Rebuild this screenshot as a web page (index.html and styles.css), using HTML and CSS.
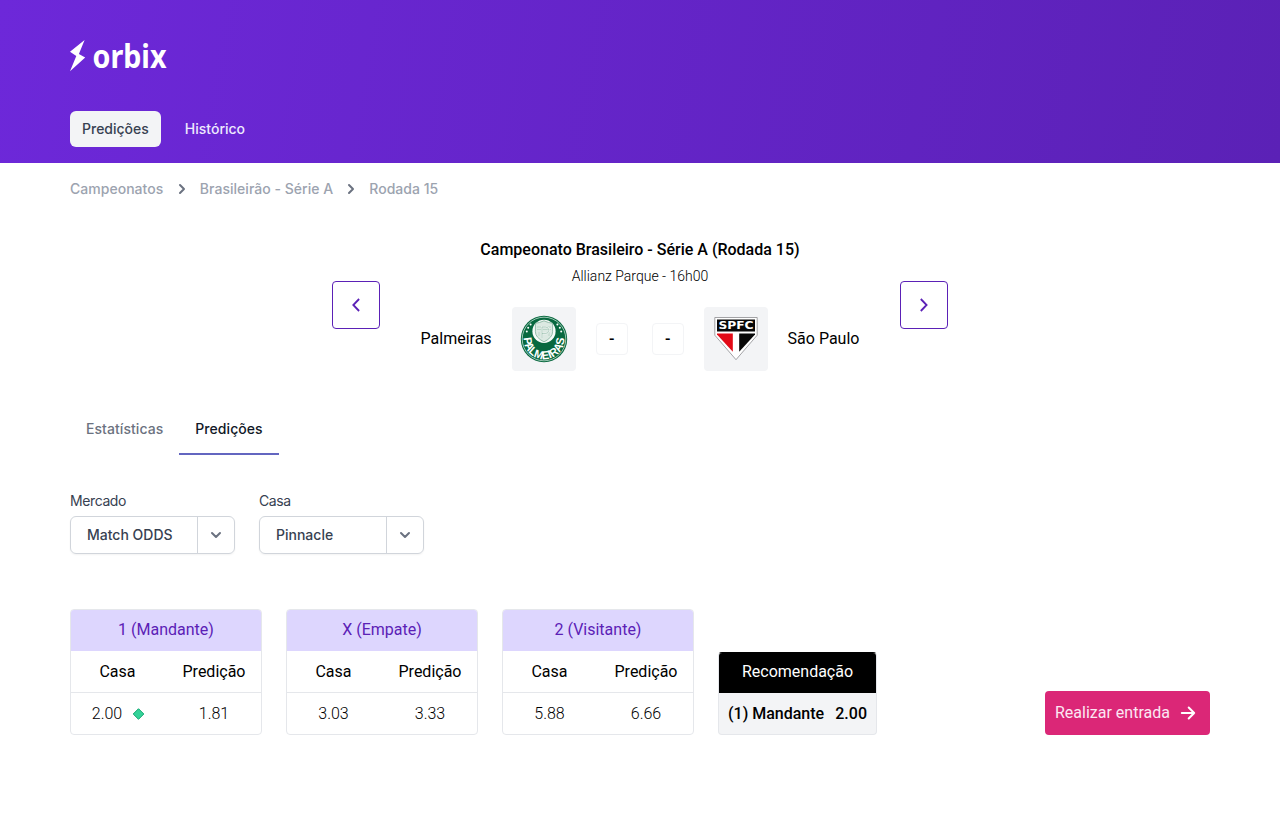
FILE: index.html
```html
<!DOCTYPE html>
<html lang="pt-BR">
<head>
<meta charset="utf-8">
<title>Orbix</title>
<link rel="stylesheet" href="styles.css">
</head>
<body>
<header class="header">
  <svg class="logo" width="110" height="32" viewBox="0 0 110 32" aria-label="orbix">
    <path d="M14.6 0 0 11.8 6.3 16 0 31.3 15.2 17.4 8.9 14Z" fill="#fff"/>
    <text class="logo-text" x="22.5" y="28" textLength="74" lengthAdjust="spacingAndGlyphs">orbix</text>
  </svg>
  <nav class="nav">
    <a class="nav-link nav-active">Predições</a>
    <a class="nav-link">Histórico</a>
  </nav>
</header>
<main class="page">
  <nav class="breadcrumb">
    <span>Campeonatos</span>
    <svg class="crumb-icon" width="20" height="20" viewBox="0 0 20 20"><path d="m8 6 4 4-4 4"/></svg>
    <span>Brasileirão - Série A</span>
    <svg class="crumb-icon" width="20" height="20" viewBox="0 0 20 20"><path d="m8 6 4 4-4 4"/></svg>
    <span>Rodada 15</span>
  </nav>

  <section class="match">
    <button class="arrow" aria-label="Anterior"><svg width="20" height="20" viewBox="0 0 20 20"><path d="m13.1 4-5.8 6 5.8 6"/></svg></button>
    <div class="match-info">
      <h1 class="match-title">Campeonato Brasileiro - Série A (Rodada 15)</h1>
      <p class="match-place">Allianz Parque - 16h00</p>
      <div class="teams">
        <span class="team">Palmeiras</span>
        <div class="badge">
          <svg width="48" height="48" viewBox="0 0 48 48">
            <defs><path id="arc" d="M4.2 19.4A20.3 20.3 0 1 0 43.8 19.4"/></defs>
            <circle cx="24" cy="24" r="23.2" fill="#08683f"/>
            <circle cx="24" cy="24" r="21.8" fill="none" stroke="#d9eee4" stroke-width=".7"/>
            <circle cx="24" cy="16.3" r="11.6" fill="#f7fbf9"/>
            <path d="M15.4 8.2q4-.2 8.6-2.4 4.6 2.2 8.6 2.4v8.6q0 5.7-8.6 10.1-8.6-4.4-8.6-10.1Z" fill="#dce9e2" stroke="#7fae99" stroke-width=".8"/>
            <path d="M17 12h14M17 14.5h14M19 17v4m10-4v4" stroke="#b3cfc2" stroke-width=".8"/>
            <path d="M22 23V12h3.3q3.5 0 3.5 3.3t-3.5 3.3H22" fill="none" stroke="#f7fbf9" stroke-width="1.6"/>
            <path d="M22 23V12h3.3q3.5 0 3.5 3.3t-3.5 3.3H22" fill="none" stroke="#6fa38b" stroke-width=".5"/>
            <g fill="#fff"><circle cx="10.6" cy="9.4" r="1"/><circle cx="8.2" cy="12.8" r="1"/><circle cx="6.8" cy="16.5" r="1"/><circle cx="37.4" cy="9.4" r="1"/><circle cx="39.8" cy="12.8" r="1"/><circle cx="41.2" cy="16.5" r="1"/></g>
            <text class="crest-name"><textPath href="#arc" startOffset="3.5" textLength="65" lengthAdjust="spacingAndGlyphs">PALMEIRAS</textPath></text>
          </svg>
        </div>
        <span class="score">-</span>
        <span class="score score-away">-</span>
        <div class="badge">
          <svg width="48" height="48" viewBox="0 0 48 48">
            <path d="M2.8 2.5h42.4v17.7L24 44.7 2.8 20.2Z" fill="#fff" stroke="#8d8d90" stroke-width=".8"/>
            <path d="M5 4.5h38v12H5Z" fill="#080808"/>
            <path d="M5 18.5h15.8v18.2L5 19.6Z" fill="#e20a17"/>
            <path d="M27.2 18.5H43v1.1L27.2 36.7Z" fill="#080808"/>
            <text class="spfc" x="6.4" y="14.4" textLength="35.2" lengthAdjust="spacingAndGlyphs">SPFC</text>
          </svg>
        </div>
        <span class="team">São Paulo</span>
      </div>
    </div>
    <button class="arrow" aria-label="Próximo"><svg width="20" height="20" viewBox="0 0 20 20"><path d="m6.8 4 5.8 6-5.8 6"/></svg></button>
  </section>

  <div class="tabs">
    <a class="tab">Estatísticas</a>
    <a class="tab tab-active">Predições</a>
  </div>

  <div class="filters">
    <div>
      <div class="label">Mercado</div>
      <div class="select"><span class="select-value">Match ODDS</span><span class="select-toggle"><svg width="20" height="20" viewBox="0 0 20 20"><path d="m6 8 4 4 4-4"/></svg></span></div>
    </div>
    <div>
      <div class="label">Casa</div>
      <div class="select"><span class="select-value">Pinnacle</span><span class="select-toggle"><svg width="20" height="20" viewBox="0 0 20 20"><path d="m6 8 4 4 4-4"/></svg></span></div>
    </div>
  </div>

  <div class="cards">
    <section class="card">
      <h2 class="card-title">1 (Mandante)</h2>
      <div class="row"><span>Casa</span><span>Predição</span></div>
      <div class="row values"><span class="best">2.00<svg width="13" height="12" viewBox="0 0 13 12"><path d="m6.5.7 5.3 5.3-5.3 5.3L1.2 6Z" fill="#34d399" stroke="#10a66f"/></svg></span><span>1.81</span></div>
    </section>
    <section class="card">
      <h2 class="card-title">X (Empate)</h2>
      <div class="row"><span>Casa</span><span>Predição</span></div>
      <div class="row values"><span>3.03</span><span>3.33</span></div>
    </section>
    <section class="card">
      <h2 class="card-title">2 (Visitante)</h2>
      <div class="row"><span>Casa</span><span>Predição</span></div>
      <div class="row values"><span>5.88</span><span>6.66</span></div>
    </section>
    <section class="card tip">
      <h2 class="card-title tip-title">Recomendação</h2>
      <div class="tip-body"><span>(1) Mandante</span><span>2.00</span></div>
    </section>
    <button class="enter">Realizar entrada<svg width="20" height="20" viewBox="0 0 20 20"><path d="M3.8 10h12.4M10.7 4.5l5.5 5.5-5.5 5.5"/></svg></button>
  </div>
</main>
</body>
</html>
```
FILE: styles.css
```css
* { box-sizing: border-box; }
body { margin: 0; background: #fff; color: #000; font: 400 16px/24px Roboto, sans-serif; }
h1, h2, p { margin: 0; font-weight: 400; font-size: 16px; }
button { font: inherit; margin: 0; }
svg { display: block; flex: none; }

.header { height: 163px; padding: 40px 70px 0; background: linear-gradient(100deg, #6d28d9, #5b21b6); }
.logo { overflow: visible; }
.logo-text { font: 700 33px/1 "Noto Sans", sans-serif; fill: #fff; }
.nav { display: flex; gap: 12px; margin-top: 39px; }
.nav-link { padding: 8px 12px; border-radius: 6px; color: #ede9fe; font: 500 14px/20px Inter, sans-serif; }
.nav-active { background: #f3f4f6; color: #374151; }

.page { padding: 0 70px; }
.breadcrumb { display: flex; align-items: center; gap: 8px; padding-top: 16px; font: 500 14px/20px Inter, sans-serif; letter-spacing: .03px; color: #9ca3af; }
.breadcrumb span:first-child { margin-right: .5px; }
.crumb-icon { fill: none; stroke: #6b7280; stroke-width: 2; stroke-linecap: round; stroke-linejoin: round; }

.match { display: flex; justify-content: space-between; align-items: center; width: 616px; height: 134px; margin: 39px auto 0; }
.arrow { display: flex; align-items: center; justify-content: center; width: 48px; height: 48px; padding: 0; border: 1px solid #5b21b6; border-radius: 4px; background: #fff; }
.arrow svg { fill: none; stroke: #5b21b6; stroke-width: 1.8; }
.match-info { text-align: center; }
.match-title { margin-top: -1px; font-weight: 500; }
.match-place { margin: 4px 0 21px; font-size: 14px; line-height: 20px; font-weight: 300; }
.teams { display: flex; align-items: center; justify-content: center; gap: 20px; }
.badge { display: flex; align-items: center; justify-content: center; width: 64px; height: 64px; border-radius: 4px; background: #f3f4f6; }
.crest-name { font: 700 11.5px "Liberation Sans", sans-serif; fill: #fff; }
.spfc { font: 700 11px "DejaVu Sans", sans-serif; fill: #fff; }
.score { width: 32px; height: 32px; border: 1px solid #f3f4f6; border-radius: 4px; line-height: 30px; font-weight: 500; }
.score-away { margin-left: 4px; }

.tabs { display: flex; margin-top: 32px; font: 500 14px/20px Inter, sans-serif; letter-spacing: .06px; color: #6b7280; }
.tab { padding: 15px 16px 14px; border-bottom: 2px solid transparent; }
.tab-active { color: #111827; border-color: #6366c0; }

.filters { display: flex; gap: 24px; margin-top: 36px; color: #374151; }
.label { margin-bottom: 5px; font: 400 14px/20px Inter, sans-serif; letter-spacing: -.4px; }
.select { display: flex; width: 165px; height: 38px; border: 1px solid #d1d5db; border-radius: 6px; box-shadow: 0 1px 2px rgba(0, 0, 0, .05); font: 500 14px/36px Inter, sans-serif; }
.select-value { flex: 1; padding-left: 16px; }
.select-toggle { display: flex; align-items: center; justify-content: center; width: 37px; border-left: 1px solid #d1d5db; }
.select-toggle svg { fill: none; stroke: #6b7280; stroke-width: 2; stroke-linecap: round; stroke-linejoin: round; }

.cards { display: flex; align-items: flex-end; gap: 24px; margin-top: 55px; }
.card { width: 192px; border: 1px solid #e5e7eb; border-radius: 4px; overflow: hidden; }
.card-title { height: 41px; line-height: 40px; text-align: center; background: #ddd6fe; color: #5b21b6; }
.row { display: grid; grid-template-columns: 94px 1fr; line-height: 41px; text-align: center; }
.row > :last-child { padding-left: 2px; }
.row > :first-child { margin-left: -1px; }
.values { height: 42px; border-top: 1px solid #e5e7eb; font-weight: 300; }
.row > .best { display: flex; align-items: center; justify-content: center; gap: 10px; margin-left: 1px; }
.tip { width: 159px; border-top-color: #000; background: #f3f4f6; }
.tip-title { height: 41px; line-height: 40px; margin-top: -1px; background: #000; color: #fff; }
.tip-body { display: flex; justify-content: space-between; padding: 0 9px; height: 41px; line-height: 41px; font-weight: 500; }
.enter { display: flex; align-items: center; justify-content: space-between; width: 165px; height: 44px; margin-left: auto; padding: 0 12px 0 10px; border: 0; border-radius: 4px; background: #db2777; color: #fce7f3; white-space: nowrap; }
.enter svg { fill: none; stroke: #fff; stroke-width: 2; stroke-linecap: round; stroke-linejoin: round; }
```
